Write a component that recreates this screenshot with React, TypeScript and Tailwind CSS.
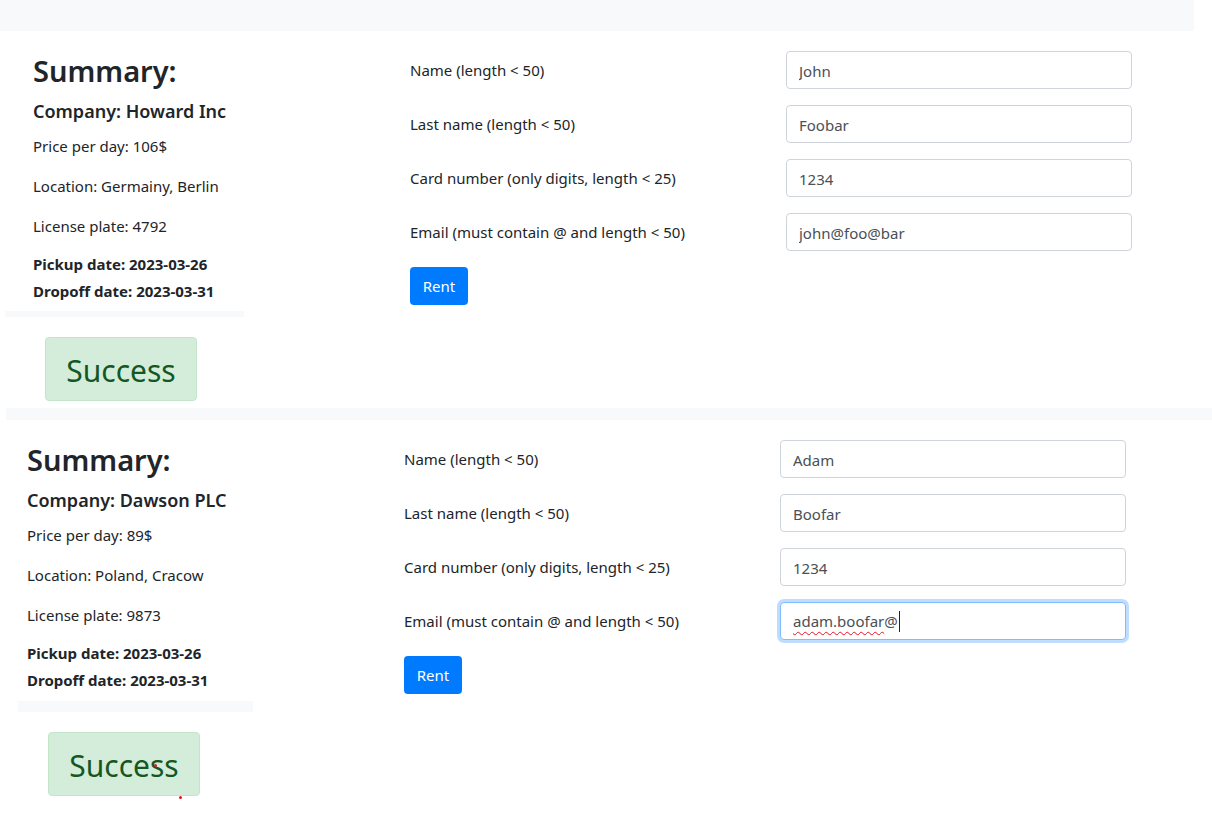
import React from 'react';

interface Rental {
  company: string;
  price: string;
  location: string;
  plate: string;
  pickup: string;
  dropoff: string;
  values: string[];
}

const labels = [
  'Name (length < 50)',
  'Last name (length < 50)',
  'Card number (only digits, length < 25)',
  'Email (must contain @ and length < 50)',
];

const rentals: Rental[] = [
  {
    company: 'Howard Inc',
    price: '106$',
    location: 'Germainy, Berlin',
    plate: '4792',
    pickup: '2023-03-26',
    dropoff: '2023-03-31',
    values: ['John', 'Foobar', '1234', 'john@foo@bar'],
  },
  {
    company: 'Dawson PLC',
    price: '89$',
    location: 'Poland, Cracow',
    plate: '9873',
    pickup: '2023-03-26',
    dropoff: '2023-03-31',
    values: ['Adam', 'Boofar', '1234', 'adam.boofar@'],
  },
];

function FocusedInput({ value }: { value: string }) {
  const name = value.replace('@', '');
  return (
    <div className="flex h-[38px] w-[346px] items-center rounded-[4px] border border-[#80bdff] bg-white px-3 text-[15px] text-[#495057] shadow-[0_0_0_3px_rgba(0,123,255,0.25)]">
      <span className="underline decoration-[#e81123] decoration-wavy decoration-1 underline-offset-[4px]">{name}</span>
      <span>@</span>
      <span className="ml-px h-[21px] w-px bg-[#212529]" />
    </div>
  );
}

function RentForm({ values, focusLast, second }: { values: string[]; focusLast?: boolean; second?: boolean }) {
  return (
    <form className={second ? 'ml-[151px] flex flex-col gap-4 pt-5' : 'ml-[166px] flex flex-col gap-4 pt-5'}>
      {labels.map((label, i) => (
        <div key={label} className="flex h-[38px] items-center">
          <label className="w-[376px] shrink-0 leading-[38px]">{label}</label>
          {focusLast && i === labels.length - 1 ? (
            <FocusedInput value={values[i]} />
          ) : (
            <input
              readOnly
              value={values[i]}
              className="h-[38px] w-[346px] rounded-[4px] border border-[#ced4da] bg-white px-3 pt-px text-[15px] text-[#495057] outline-none"
            />
          )}
        </div>
      ))}
      <button type="button" className="h-[38px] w-[58px] rounded-[4px] bg-[#007bff] text-[15px] text-white">
        Rent
      </button>
    </form>
  );
}

function Summary({ rental, second }: { rental: Rental; second?: boolean }) {
  return (
    <div className={second ? 'ml-[18px] w-[235px] shrink-0 pt-[22px]' : 'ml-[5px] w-[239px] shrink-0 pt-[22px]'}>
      <div className={second ? 'pl-[9px]' : 'pl-[28px]'}>
        <h2 className="text-[29px] font-semibold leading-[36px]">Summary:</h2>
        <h5 className="text-[18px] font-semibold leading-[45px]">Company: {rental.company}</h5>
        <p className="mb-4 leading-[24px]">Price per day: {rental.price}</p>
        <p className="mb-4 leading-[24px]">Location: {rental.location}</p>
        <p className="mb-[13px] leading-[24px]">License plate: {rental.plate}</p>
        <p className="font-bold leading-[27px]">Pickup date: {rental.pickup}</p>
        <p className="font-bold leading-[27px]">Dropoff date: {rental.dropoff}</p>
      </div>
      <div className={second ? 'mt-[7px] h-[11px] bg-[#f8f9fa]' : 'mt-[6px] h-[6px] bg-[#f8f9fa]'} />
      <div
        className={
          second
            ? 'relative ml-[30px] mt-5 flex h-[64px] w-[152px] items-center justify-center rounded-[4px] border border-[#c3e6cb] bg-[#d4edda] pt-[4px] text-[30px] leading-[58px] text-[#155724]'
            : 'relative ml-[40px] mt-5 flex h-[64px] w-[152px] items-center justify-center rounded-[4px] border border-[#c3e6cb] bg-[#d4edda] pt-[4px] text-[30px] leading-[58px] text-[#155724]'
        }
      >
        Success
        {second && (
          <>
            <span className="absolute left-[105px] top-[31px] h-[3px] w-[3px] rounded-full bg-[#e81123]" />
            <span className="absolute left-[130px] top-[63px] h-[3px] w-[3px] rounded-full bg-[#e81123]" />
          </>
        )}
      </div>
    </div>
  );
}

export default function App() {
  return (
    <div className="min-h-[824px] w-[1212px] bg-white font-['Noto_Sans',sans-serif] text-[15px] text-[#212529]">
      <div className="h-[31px] w-[1194px] bg-[#f8f9fa]" />
      <section className="flex h-[377px]">
        <Summary rental={rentals[0]} />
        <RentForm values={rentals[0].values} />
      </section>
      <div className="ml-[6px] h-[12px] bg-[#f8f9fa]" />
      <section className="flex">
        <Summary rental={rentals[1]} second />
        <RentForm values={rentals[1].values} focusLast second />
      </section>
    </div>
  );
}
